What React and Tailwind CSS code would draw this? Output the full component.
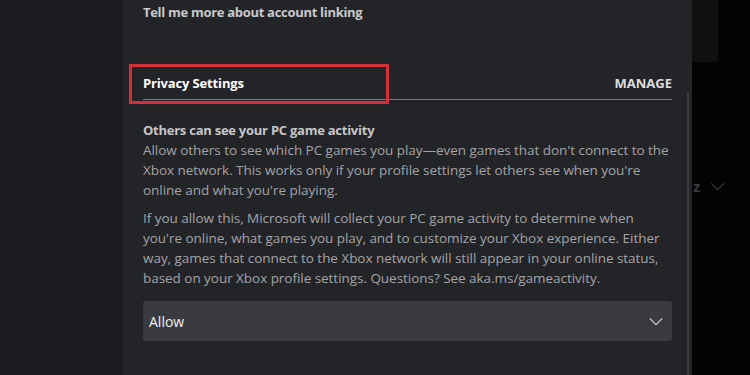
import React from 'react';

const Chevron = ({ className }) => (
  <svg viewBox="0 0 16 10" className={className} fill="none" stroke="currentColor" strokeWidth="1.4">
    <path d="M1 1.5l7 7 7-7" />
  </svg>
);

const App = () => {
  return (
    <div className="flex h-[375px] w-[750px] overflow-hidden bg-[#030303] font-['Open_Sans','Noto_Sans',sans-serif]">
      {/* fond gauche */}
      <div className="w-[123px] shrink-0 bg-[#1c1d20]" />

      {/* panneau */}
      <div className="relative flex w-[569px] shrink-0 bg-[#232428]">
        <div className="ml-[20px] w-[529px] shrink-0">
          <div className="pt-[3px] text-[13px] font-bold leading-[18px] tracking-[-0.3px] text-[#c9c9cb]">
            Tell me more about account linking
          </div>

          <div className="mt-[51px] flex h-[28px] items-center justify-between border-b border-[#77787c] pb-[6px]">
            <span className="text-[13px] font-bold leading-[18px] tracking-[-0.15px] text-white">Privacy Settings</span>
            <span className="text-[13px] font-bold leading-[18px] text-[#dedede]">MANAGE</span>
          </div>

          <div className="mt-[21px] text-[13px] font-bold leading-[18px] tracking-[-0.25px] text-[#c6c6c8]">
            Others can see your PC game activity
          </div>
          <p className="mt-[1px] text-[13.5px] leading-[20px] tracking-[-0.04px] text-[#a3a3a6]">
            Allow others to see which PC games you play—even games that don't connect to the Xbox network. This works only if your profile settings let others see when you're online and what you're playing.
          </p>
          <p className="mt-[8px] text-[13.5px] leading-[20px] tracking-[-0.04px] text-[#a3a3a6]">
            If you allow this, Microsoft will collect your PC game activity to determine when you're online, what games you play, and to customize your Xbox experience. Either way, games that connect to the Xbox network will still appear in your online status, based on your Xbox profile settings. Questions? See aka.ms/gameactivity.
          </p>

          <div className="mt-[13px] flex h-[40px] items-center justify-between rounded-[3px] bg-[#3a3b40] pl-[6px] pr-[9px]">
            <span className="text-[14px] text-[#f2f2f2]">Allow</span>
            <Chevron className="h-[9px] w-[14px] text-[#cfcfd2]" />
          </div>
        </div>

        {/* barre de défilement */}
        <div className="ml-[15px] mt-[93px] h-[282px] w-[2px] bg-[#3c3d41]" />

        {/* annotation */}
        <div className="absolute left-[6px] top-[64px] h-[40px] w-[260px] border-[3px] border-[#d3303a]" />
      </div>

      {/* fond droit */}
      <div className="flex w-[58px] shrink-0 flex-col">
        <div className="h-[62px] w-[26px] bg-[#0f0f10]" />
        <div className="ml-[1px] mt-[116px] flex items-center gap-[10px] text-[#3a3a3c]">
          <span className="text-[15px] font-bold leading-[16px]">z</span>
          <Chevron className="h-[9px] w-[15px]" />
        </div>
      </div>
    </div>
  );
};

export default App;
